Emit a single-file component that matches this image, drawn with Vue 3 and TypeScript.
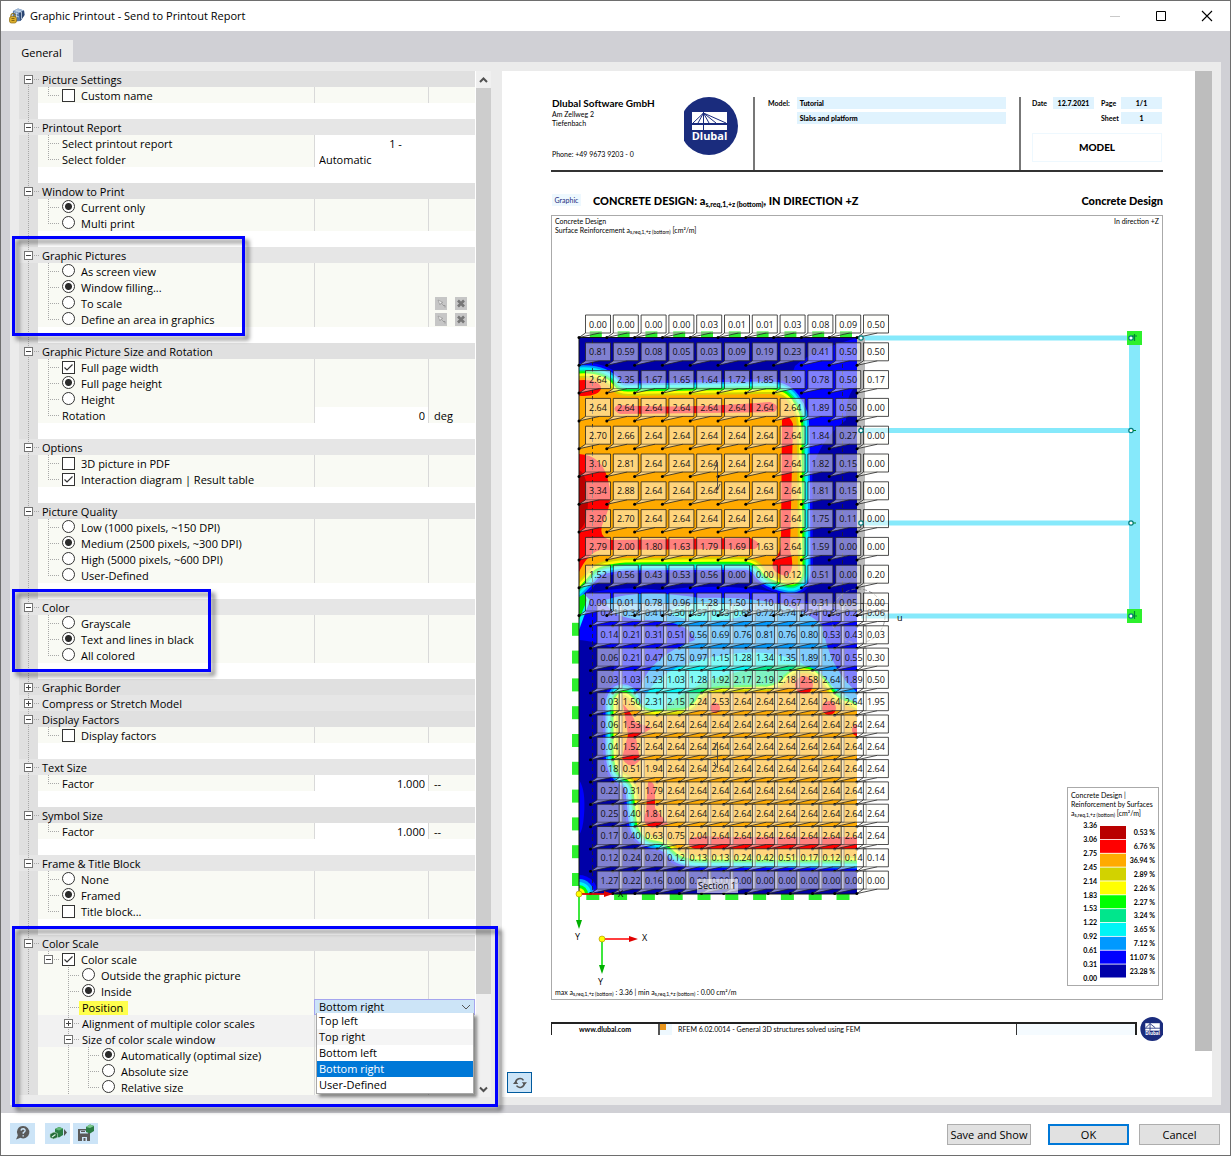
<script setup lang="ts">
import { ref } from 'vue'

type Kind = 'check' | 'radio' | 'text' | 'node'
interface Row {
  label: string
  kind: Kind
  on?: boolean
  level?: number
  last?: boolean
  box?: '-' | '+'
  value?: string
  unit?: string
  wide?: 'center' | 'left'
  tools?: boolean
  combo?: boolean
  plain?: boolean
}
interface Group {
  title: string
  closed?: boolean
  mark?: string
  gap?: boolean
  rows: Row[]
}

const check = (label: string, on = false): Row => ({ label, kind: 'check', on })
const radio = (label: string, on = false): Row => ({ label, kind: 'radio', on })

const groups: Group[] = [
  { title: 'Picture Settings', gap: true, rows: [check('Custom name')] },
  {
    title: 'Printout Report', gap: true, rows: [
      { label: 'Select printout report', kind: 'text', value: '1 -', wide: 'center' },
      { label: 'Select folder', kind: 'text', value: 'Automatic', wide: 'left' },
    ],
  },
  { title: 'Window to Print', gap: true, rows: [radio('Current only', true), radio('Multi print')] },
  {
    title: 'Graphic Pictures', gap: true, mark: 'mark-pictures', rows: [
      radio('As screen view'), radio('Window filling...', true),
      { ...radio('To scale'), tools: true }, { ...radio('Define an area in graphics'), tools: true },
    ],
  },
  {
    title: 'Graphic Picture Size and Rotation', gap: true, rows: [
      check('Full page width', true), radio('Full page height', true), radio('Height'),
      { label: 'Rotation', kind: 'text', value: '0', unit: 'deg' },
    ],
  },
  { title: 'Options', gap: true, rows: [check('3D picture in PDF'), check('Interaction diagram | Result table', true)] },
  {
    title: 'Picture Quality', gap: true, rows: [
      radio('Low (1000 pixels, ~150 DPI)'), radio('Medium (2500 pixels, ~300 DPI)', true),
      radio('High (5000 pixels, ~600 DPI)'), radio('User-Defined'),
    ],
  },
  {
    title: 'Color', gap: true, mark: 'mark-color', rows: [
      radio('Grayscale'), radio('Text and lines in black', true), radio('All colored'),
    ],
  },
  { title: 'Graphic Border', closed: true, rows: [] },
  { title: 'Compress or Stretch Model', closed: true, rows: [] },
  { title: 'Display Factors', gap: true, rows: [check('Display factors')] },
  { title: 'Text Size', gap: true, rows: [{ label: 'Factor', kind: 'text', value: '1.000', unit: '--' }] },
  { title: 'Symbol Size', gap: true, rows: [{ label: 'Factor', kind: 'text', value: '1.000', unit: '--' }] },
  { title: 'Frame & Title Block', gap: true, rows: [radio('None'), radio('Framed', true), check('Title block...')] },
  {
    title: 'Color Scale', mark: 'mark-scale', rows: [
      { ...check('Color scale', true), box: '-' },
      { ...radio('Outside the graphic picture'), level: 2 },
      { ...radio('Inside', true), level: 2 },
      { label: 'Position', kind: 'text', level: 2, combo: true },
      { label: 'Alignment of multiple color scales', kind: 'node', level: 2, box: '+', plain: true },
      { label: 'Size of color scale window', kind: 'node', level: 2, box: '-', plain: true },
      { ...radio('Automatically (optimal size)', true), level: 3 },
      { ...radio('Absolute size'), level: 3 },
      { ...radio('Relative size'), level: 3, last: true },
    ],
  },
]

const isLast = (g: Group, i: number): boolean => g.rows[i].last === true || i === g.rows.length - 1

const positions = ['Top left', 'Top right', 'Bottom left', 'Bottom right', 'User-Defined']
const position = ref('Bottom right')

/* Result values per mesh row */
const rep = (v: string, n: number): string => Array(n).fill(v).join(' ')
const upper: string[][] = [
  '0.00 0.00 0.00 0.00 0.03 0.01 0.01 0.03 0.08 0.09 0.50',
  '0.81 0.59 0.08 0.05 0.03 0.09 0.19 0.23 0.41 0.50 0.50',
  '2.64 2.35 1.67 1.65 1.64 1.72 1.85 1.90 0.78 0.50 0.17',
  rep('2.64', 8) + ' 1.89 0.50 0.00',
  '2.70 2.66 ' + rep('2.64', 6) + ' 1.84 0.27 0.00',
  '3.10 2.81 ' + rep('2.64', 6) + ' 1.82 0.15 0.00',
  '3.34 2.88 ' + rep('2.64', 6) + ' 1.81 0.15 0.00',
  '3.20 2.70 ' + rep('2.64', 6) + ' 1.75 0.11 0.00',
  '2.79 2.00 1.80 1.63 1.79 1.69 1.63 2.64 1.59 0.00 0.00',
  '1.52 0.56 0.43 0.53 0.56 0.00 0.00 0.12 0.51 0.00 0.20',
  '0.00 0.01 0.78 0.96 1.28 1.50 1.10 0.67 0.31 0.05 0.00',
].map(r => r.split(' '))
const lower: string[][] = [
  '0.41 0.34 0.41 0.50 0.57 0.63 0.68 0.72 0.74 0.74 0.66 0.22 0.06',
  '0.14 0.21 0.31 0.51 0.56 0.69 0.76 0.81 0.76 0.80 0.53 0.43 0.03',
  '0.06 0.21 0.47 0.75 0.97 1.15 1.28 1.34 1.35 1.89 1.70 0.55 0.30',
  '0.03 1.03 1.23 1.03 1.28 1.92 2.17 2.19 2.18 2.58 2.64 1.89 0.50',
  '0.03 1.50 2.31 2.15 2.24 2.53 ' + rep('2.64', 6) + ' 1.95',
  '0.06 1.53 ' + rep('2.64', 11),
  '0.04 1.52 ' + rep('2.64', 11),
  '0.18 0.51 1.94 ' + rep('2.64', 10),
  '0.22 0.31 1.79 ' + rep('2.64', 10),
  '0.25 0.40 1.81 ' + rep('2.64', 10),
  '0.17 0.40 0.63 0.75 2.04 ' + rep('2.64', 8),
  '0.12 0.24 0.20 0.12 0.13 0.13 0.24 0.42 0.51 0.17 0.12 0.14 0.14',
  '1.27 0.22 0.16 ' + rep('0.00', 10),
].map(r => r.split(' '))

interface Tag { x: number; y: number; v: string }
const tags: Tag[] = []
lower.forEach((r, j) => r.forEach((v, k) => tags.push({ x: 590.5 + k * 22.2, y: 626 + j * 22.3, v })))
upper.forEach((r, j) => r.forEach((v, k) => tags.push({ x: 579 + k * 27.8, y: 337.5 + j * 27.8, v })))

const zoneA = 'M570 379C596 375 606 382 611 389Q616 396 628 396L770 394Q784 394 790 405Q797 414 797 430L798 572Q797 582 788 580Q768 576 764 567Q757 558 745 557L625 558Q600 560 591 567Q582 578 570 590Z'
const zoneB = 'M618 704Q621 690 631 703Q640 716 655 716L685 714Q698 709 702 699Q708 692 730 692L768 691Q782 689 788 680Q800 669 812 675Q822 682 828 693Q836 705 848 706L870 718V856L700 855Q683 855 676 847Q668 837 655 836Q643 834 641 820L638 790Q636 778 625 773Q618 768 618 750Z'
const bands: [string, number][] = [
  ['#0000ff', 30], ['#0099ff', 25], ['#00f5f5', 21], ['#00e68c', 16], ['#00ff00', 13], ['#ffff00', 9], ['#d2d200', 4],
]
const outerBands = bands.slice(0, 4)
const innerBands = bands.slice(4)

const scaleValues = ['3.36', '3.06', '2.75', '2.45', '2.14', '1.83', '1.53', '1.22', '0.92', '0.61', '0.31', '0.00']
const scaleBands: [string, string][] = [
  ['#b90000', '0.53 %'], ['#ff0000', '6.76 %'], ['#ffaa00', '36.94 %'], ['#d2d200', '2.89 %'], ['#ffff00', '2.26 %'],
  ['#00ff00', '2.27 %'], ['#00e68c', '3.24 %'], ['#00f5f5', '3.65 %'], ['#0099ff', '7.12 %'], ['#0000ff', '11.07 %'], ['#0000a8', '23.28 %'],
]
</script>

<template>
  <div class="window">
    <header class="titlebar">
      <svg class="app-icon" viewBox="0 0 16 16" aria-hidden="true">
        <path d="M4 3 9 0.5 15 2.5 15.5 7 11.5 13 6.5 13.5 3.5 8Z" fill="#5578a8" />
        <path d="M4 3 9 .5 15 2.5 10 5Z" fill="#9fb9d8" />
        <path d="M10 5 15 2.5 15.5 7 11.5 13Z" fill="#2c4672" />
        <path d="M5 4.5 9.5 6M5 7l5 2M7 2.5l5 1.5M7.5 4.5V12M12.5 4v7" stroke="#dbe6f2" stroke-width=".7" fill="none" />
        <path d="M2 9.500V7.500a2 2 0 0 1 4 0v2" fill="none" stroke="#8a6c13" stroke-width="1.200" />
        <rect x="0.500" y="8.500" width="7" height="6.500" rx="2" fill="#dcae2c" stroke="#8a6c13" stroke-width=".7" />
        <path d="M2.500 10.500H5.500M2.500 12.500H5.500" stroke="#6d5206" stroke-width=".8" />
      </svg>
      <h1>Graphic Printout - Send to Printout Report</h1>
      <div class="win-buttons">
        <button type="button" aria-label="Minimize"><svg viewBox="0 0 12 12"><path d="M1 6.500H11" stroke="#c9c9c9" /></svg></button>
        <button type="button" aria-label="Maximize"><svg viewBox="0 0 12 12"><path d="M1.500 1.500H10.500V10.500H1.500Z" stroke="#000" fill="none" /></svg></button>
        <button type="button" aria-label="Close"><svg viewBox="0 0 12 12"><path d="M1 1 11 11M11 1 1 11" stroke="#000" stroke-width="1.100" /></svg></button>
      </div>
    </header>

    <main class="body">
      <div class="tabs"><button type="button" class="tab">General</button></div>
      <div class="panel">
        <div class="tree-pane">
          <div class="tree">
            <section v-for="(g, gi) in groups" :key="g.title" class="group" :class="{ odd: gi % 2 === 1 }">
              <div class="cat">
                <span class="knot root" :class="{ first: gi === 0 }">
                  <button type="button" class="box" :class="{ plus: g.closed }" :aria-label="'Toggle ' + g.title"></button>
                </span>
                <span class="cat-title">{{ g.title }}</span>
              </div>
              <div v-for="(r, i) in g.rows" :key="r.label" class="row" :class="{ plain: r.plain }">
                <span class="gutter"></span>
                <div class="cell name">
                  <span v-if="(r.level ?? 1) >= 2" class="spacer"></span>
                  <span v-if="(r.level ?? 1) >= 3" class="spacer line"></span>
                  <span class="knot" :class="{ last: isLast(g, i), top: r.box === '-' && !r.level }">
                    <button v-if="r.box" type="button" class="box" :class="{ plus: r.box === '+' }" :aria-label="'Toggle ' + r.label"></button>
                  </span>
                  <input v-if="r.kind === 'check'" :id="'f' + gi + '-' + i" type="checkbox" class="tick" :checked="r.on">
                  <input v-if="r.kind === 'radio'" :id="'f' + gi + '-' + i" type="radio" class="dot" :name="'g' + gi + '-' + (r.level ?? 1)" :checked="r.on">
                  <span v-if="r.kind === 'node'">{{ r.label }}</span>
                  <label v-else :for="'f' + gi + '-' + i" :class="{ lit: r.combo }">{{ r.label }}</label>
                </div>
                <div v-if="r.wide" class="cell value wide">
                  <input :id="'f' + gi + '-' + i" type="text" :class="r.wide" :value="r.value">
                </div>
                <div v-else-if="r.combo" class="cell value wide combo">
                  <select :id="'f' + gi + '-' + i" v-model="position">
                    <option v-for="p in positions" :key="p">{{ p }}</option>
                  </select>
                  <svg class="chev" viewBox="0 0 10 6"><path d="M1 1 5 5 9 1" fill="none" stroke="#555" /></svg>
                  <ul class="menu" role="listbox">
                    <li v-for="p in positions" :key="p" role="option" :aria-selected="p === position" @click="position = p">{{ p }}</li>
                  </ul>
                </div>
                <template v-else>
                  <div class="cell value" :class="{ filled: r.value }">
                    <input v-if="r.value" :id="'f' + gi + '-' + i" type="text" class="right" :value="r.value">
                  </div>
                  <div class="cell unit">
                    <span v-if="r.unit">{{ r.unit }}</span>
                    <template v-if="r.tools">
                      <button type="button" class="tool" disabled aria-label="Select in graphics"><svg viewBox="0 0 12 13"><path d="M3 3 8 5.500 6 6 9 9M3 3 5 8 6 6" fill="#eee" stroke="#999" stroke-width=".7" /><path d="M8 8.500h2v2" fill="none" stroke="#999" /></svg></button>
                      <button type="button" class="tool" disabled aria-label="Delete"><svg viewBox="0 0 12 13"><path d="M3 3.500 9 9.500M9 3.500 3 9.500" stroke="#777" stroke-width="2.600" /></svg></button>
                    </template>
                  </div>
                </template>
              </div>
              <div v-if="g.gap" class="row blank"><span class="gutter"></span></div>
              <div v-if="g.mark" class="mark" :class="g.mark"></div>
            </section>
          </div>
          <div class="scroll" aria-hidden="true">
            <svg viewBox="0 0 15 16"><path d="M4 10.500 7.500 7 11 10.500" fill="none" stroke="#505050" stroke-width="2" /></svg>
            <div class="thumb"></div>
            <div class="rest"></div>
            <svg viewBox="0 0 15 16"><path d="M4 7 7.500 10.500 11 7" fill="none" stroke="#505050" stroke-width="2" /></svg>
          </div>
        </div>

        <div class="preview">
          <article class="sheet">
            <div class="head">
              <div class="company">
                <address>
                  <strong>Dlubal Software GmbH</strong>
                  <span>Am Zellweg 2</span>
                  <span>Tiefenbach</span>
                  <span class="phone">Phone: +49 9673 9203 - 0</span>
                </address>
                <svg class="logo" viewBox="4 0 54 58">
                  <circle cx="29" cy="29" r="29" fill="#1a2c7d" />
                  <rect x="12" y="15" width="35" height="11" fill="#fff" />
                  <rect x="12" y="28" width="35" height="5" fill="#fff" />
                  <path d="M23.500 15V33M23.500 16 13 26M23.500 16 18 26M23.500 16 29 26M23.500 16 36 26M23.500 16 46 26" stroke="#1a2c7d" stroke-width="1" fill="none" />
                  <text x="29.500" y="43" text-anchor="middle" class="logo-text">Dlubal</text>
                </svg>
              </div>
              <div class="model">
                <span>Model:</span>
                <div class="fields"><b>Tutorial</b><b>Slabs and platform</b></div>
              </div>
              <div class="meta">
                <div class="meta-grid">
                  <span>Date</span><b>12.7.2021</b><span>Page</span><b>1/1</b>
                  <span></span><i></i><span>Sheet</span><b>1</b>
                </div>
                <div class="kind">MODEL</div>
              </div>
            </div>

            <div class="heading">
              <span class="chip">Graphic</span>
              <h2>CONCRETE DESIGN: a<sub>s,req,1,+z (bottom)</sub>, IN DIRECTION +Z</h2>
              <h2 class="end">Concrete Design</h2>
            </div>

            <svg class="plot" viewBox="551 215 612 785">
              <defs>
                <clipPath id="slab"><rect x="579" y="337.500" width="278" height="556.500" /></clipPath>
              </defs>
              <rect x="551.500" y="215.500" width="611" height="784" fill="#fff" stroke="#aaa" />
              <g class="print slim">
                <text x="555" y="224">Concrete Design</text>
                <text x="555" y="233">Surface Reinforcement a<tspan class="sub" dy="1">s,req,1,+z (bottom)</tspan><tspan dy="-1"> [cm²/m]</tspan></text>
                <text x="1159" y="224" text-anchor="end">In direction +Z</text>
                <text x="555" y="995">max a<tspan class="sub" dy="1">s,req,1,+z (bottom)</tspan><tspan dy="-1"> : 3.36 | min a</tspan><tspan class="sub" dy="1">s,req,1,+z (bottom)</tspan><tspan dy="-1"> : 0.00 cm²/m</tspan></text>
              </g>

              <g stroke="#86e9fb" stroke-width="5">
                <path d="M861 338H1134M861 430.500H1131M861 523H1131M861 616H1134" />
                <path d="M1134.500 338V616" stroke-width="11" />
              </g>
              <g fill="#2df02d">
                <rect x="1127" y="331" width="15" height="14" />
                <rect x="1127" y="609" width="15" height="14" />
                <rect v-for="n in 10" :key="'t' + n" :x="562 + n * 27.8" y="331" width="12" height="6" />
                <rect v-for="n in 10" :key="'b' + n" :x="558.5 + n * 27.8" y="894" width="13" height="6" />
                <rect v-for="n in 10" :key="'l' + n" x="572" :y="595 + n * 27.8" width="7" height="13" />
              </g>
              <g fill="#fff" stroke="#007a7a" stroke-width="1.200">
                <circle cx="1131" cy="338" r="2.200" /><circle cx="1131" cy="430.500" r="2.200" />
                <circle cx="1131" cy="523" r="2.200" /><circle cx="1131" cy="616" r="2.200" />
              </g>
              <path d="M1134.500 334V341M1132 336h5M1134.500 611v8M1132 616h5M1133 430.500h3M1133 523h3" stroke="#083" stroke-width="1.200" />

              <rect x="857" y="338" width="8" height="278" fill="#b9b9b9" />
              <g clip-path="url(#slab)">
                <rect x="579" y="337" width="278" height="557" fill="#0000a8" />
                <path d="M795 366Q812 350 857 338V385Q845 395 846 420Q820 440 812 470L803 560H790V380Z" fill="#0000ff" />
                <path d="M579 595Q620 585 660 590Q750 580 800 600L857 612V700H640Q600 690 620 650Q590 640 579 640Z" fill="#0000ff" />
                <path v-for="[c, w] in bands" :key="c" :d="zoneA" fill="none" :stroke="c" :stroke-width="w" stroke-linejoin="round" />
                <path :d="zoneA" fill="#ffaa00" />
                <path v-for="[c, w] in outerBands" :key="c" :d="zoneB" fill="none" :stroke="c" :stroke-width="w" stroke-linejoin="round" />
                <path d="M605 600Q640 588 700 598Q790 595 822 625Q830 670 857 692V720H640Q628 665 695 640Q690 622 650 620Q610 620 605 600Z" fill="#0099ff" />
                <path d="M668 612Q690 596 740 606Q755 618 720 620Q680 622 668 612ZM640 712Q648 672 700 660Q760 644 800 662Q832 686 857 704V722H640Z" fill="#00f5f5" />
                <path d="M655 716Q692 682 730 674Q780 660 806 666Q832 686 857 708V725Z" fill="#00e68c" />
                <path v-for="[c, w] in innerBands" :key="c" :d="zoneB" fill="none" :stroke="c" :stroke-width="w" stroke-linejoin="round" />
                <path :d="zoneB" fill="#ffaa00" />
                <g fill="#ff0000">
                  <ellipse cx="584" cy="388" rx="17" ry="8" />
                  <path d="M579 454Q602 455 608 480Q614 500 604 520Q596 538 612 540L750 538Q764 543 755 549L600 550Q588 553 579 572Z" />
                  <path d="M618 405Q680 409 770 402Q782 406 774 412L620 414Q610 409 618 405ZM782 420Q788 412 793 424L790 550Q796 572 786 576Q768 572 774 560Q782 552 781 540Z" />
                  <path d="M623 704Q634 716 635 722L652 728 636 738 640 760Q630 772 622 758L628 735Z" />
                  <circle cx="804" cy="685" r="9" /><circle cx="829" cy="708" r="7" /><circle cx="715" cy="708" r="5" />
                  <ellipse cx="857" cy="730" rx="5" ry="6" />
                  <path d="M648 782Q654 780 655 790V808L668 824 652 828Q640 824 646 812ZM690 838Q700 835 720 837H857V849H695Q685 846 690 838Z" />
                </g>
                <path d="M579 470Q588 475 588 500Q588 525 579 530Z" fill="#b90000" />
                <path d="M579 780Q586 790 584 815Q583 830 579 835Z" fill="#0000ff" />
                <circle cx="579" cy="894" r="19" fill="#0000ff" /><circle cx="579" cy="894" r="15" fill="#0099ff" />
                <circle cx="579" cy="894" r="12" fill="#00f5f5" /><circle cx="579" cy="894" r="9" fill="#00ff00" />
                <circle cx="579" cy="894" r="6" fill="#ffff00" />
                <path d="M579 630 590 600 584 594 579 597Z" fill="#00f5f5" />
                <path d="M579 620 587 600 584 594 579 597Z" fill="#00e600" />
              </g>
              <path d="M579 337.500H857M579 337.500V894M579 894H857" stroke="#111" stroke-width="1" />
              <path d="M592.500 340V890M842.500 350V610" stroke="#222" stroke-width=".8" stroke-dasharray="4 3" />
              <circle cx="858" cy="616" r="27" fill="none" stroke="#777" stroke-width=".7" stroke-dasharray="4 2" />

              <g v-for="(t, i) in tags" :key="i" class="tag">
                <path :d="`M${t.x} ${t.y}L${t.x + 6.5} ${t.y - 4.5}V${t.y - 22.5}H${t.x + 31.500}V${t.y - 4.5}H${t.x + 20.5}Z`" />
                <path class="edge" :d="`M${t.x + 6.5} ${t.y - 4.5}H${t.x + 20.5}`" />
                <circle :cx="t.x" :cy="t.y" r="1.500" />
                <text :x="t.x + 19" :y="t.y - 10">{{ t.v }}</text>
              </g>

              <g fill="#fff" stroke="#007a7a" stroke-width="1.200">
                <circle cx="861" cy="338" r="2.200" /><circle cx="861" cy="430.500" r="2.200" /><circle cx="861" cy="523" r="2.200" />
              </g>
              <path d="M717.500 462V490M714 470 717.500 463M717.500 490 720 484M717.500 742V768M714 750 717.500 742M714 762 717.500 768" stroke="#444" stroke-width=".9" fill="none" />
              <rect x="697" y="879" width="41" height="14" fill="#fff" fill-opacity=".6" />
              <g class="axis">
                <text x="698" y="889">Section 1</text>
                <text x="897" y="621">u</text>
                <text x="618" y="897">X</text>
                <text x="575" y="940">Y</text>
                <text x="642" y="941">X</text>
                <text x="598" y="985">Y</text>
              </g>
              <path d="M579 894H605M602 939H630" stroke="#f00" stroke-width="1.500" />
              <path d="M604 891 613 894 604 897ZM629 936 638 939 629 942Z" fill="#e00000" />
              <path d="M579 894V921M602 939V966" stroke="#00e000" stroke-width="1.500" />
              <path d="M576 920H582L579 929ZM599 965H605L602 974Z" fill="#00b000" />
              <circle cx="579" cy="894" r="3" fill="#ff0" stroke="#a80" stroke-width=".6" />
              <circle cx="602" cy="939" r="3" fill="#ff0" stroke="#a80" stroke-width=".6" />

              <rect x="1067.500" y="787.500" width="91" height="198" fill="#fff" stroke="#aaa" />
              <g class="print slim">
                <text x="1071" y="798">Concrete Design |</text>
                <text x="1071" y="807">Reinforcement by Surfaces</text>
                <text x="1071" y="816">a<tspan class="sub" dy="1">s,req,1,+z (bottom)</tspan><tspan dy="-1"> [cm²/m]</tspan></text>
              </g>
              <g class="print">
                <text v-for="(v, i) in scaleValues" :key="v" x="1097" :y="828 + i * 13.9" text-anchor="end">{{ v }}</text>
                <template v-for="([c, p], i) in scaleBands" :key="c">
                  <rect x="1100" :y="826 + i * 13.85" width="26" height="13" :fill="c" />
                  <text x="1155" :y="835 + i * 13.9" text-anchor="end">{{ p }}</text>
                </template>
              </g>
            </svg>

            <footer class="sheet-foot">
              <div class="strip">
                <a href="#" class="site">www.dlubal.com</a>
                <span class="swatch"></span>
                <span class="about">RFEM 6.02.0014 - General 3D structures solved using FEM</span>
                <span class="pale"></span>
              </div>
              <svg class="logo-small" viewBox="0 0 54 58">
                <circle cx="29" cy="29" r="29" fill="#1a2c7d" />
                <rect x="12" y="15" width="35" height="11" fill="#fff" />
                <rect x="12" y="28" width="35" height="5" fill="#fff" />
                <path d="M23.500 15V33M23.500 16 13 26M23.500 16 36 26" stroke="#1a2c7d" stroke-width="2" fill="none" />
                <text x="29.500" y="44" text-anchor="middle" class="logo-text">Dlubal</text>
              </svg>
            </footer>
            <button type="button" class="refresh" aria-label="Refresh preview">
              <svg viewBox="0 0 16 16"><path d="M3 8a5 5 0 0 1 9-3M13 8a5 5 0 0 1-9 3" fill="none" stroke="#555" stroke-width="1.800" /><path d="M10 7H16L13 10.500ZM0 9H6L3 5.500Z" fill="#555" /></svg>
            </button>
          </article>
          <div class="shade"></div>
        </div>
      </div>
    </main>

    <footer class="actions">
      <button type="button" class="icon help" aria-label="Help"><svg viewBox="0 0 18 18"><path d="M9 2a6.200 6.200 0 1 1-2.500 11.800L2 15.500 3.800 11.500A6.200 6.200 0 0 1 9 2Z" fill="#5a5a5a" /><path d="M7 6.500Q7.300 4.800 9.200 4.800 11.300 5 11 6.900 10.700 7.900 9.300 8.600V9.800M9.200 11.200V12.600" fill="none" stroke="#cce4f7" stroke-width="1.500" /></svg></button>
      <button type="button" class="icon" aria-label="Load defaults"><svg viewBox="0 0 18 18"><path d="M6 5 10 3 14 4.500V11L10 13.500 6 12Z" fill="#2b7d43" /><path d="M6 5 10 3 14 4.500 10 6.500Z" fill="#63b878" /><path d="M1 10 5 8 8.500 9.500V13.500L4.500 15 1 13.500Z" fill="#256b39" stroke="#bfe0c8" stroke-width=".6" /><path d="M3 13 6.500 10.500" stroke="#d9f2df" stroke-width="1.200" /><path d="M15 5 18 8.500 15 12Z" fill="#555" /></svg></button>
      <button type="button" class="icon" aria-label="Save as default"><svg viewBox="0 0 18 18"><path d="M1 5H9V6.500H3V9.500H11V8.500H13V17H10V13H5V17H1Z" fill="#5a5a5a" /><path d="M6.500 14H8.500V17H6.500ZM4 7H8V8H4Z" fill="#5a5a5a" /><path d="M9 3 13 .5 17 2V7L13 9.500 9 8Z" fill="#2b7d43" /><path d="M9 3 13 .5 17 2 13 4Z" fill="#7cc98e" /></svg></button>
      <span class="push"></span>
      <button type="button" class="btn save">Save and Show</button>
      <button type="button" class="btn ok">OK</button>
      <button type="button" class="btn">Cancel</button>
    </footer>
  </div>
</template>

<style>
body { margin: 0; background: #fff; }
</style>

<style scoped>
* { box-sizing: border-box; }
.window {
  min-height: 100vh; display: flex; flex-direction: column;
  border: 1px solid #6e6e6e; background: #fff; color: #000;
  font-family: "Open Sans", "Noto Sans", sans-serif; font-size: 11px; line-height: 16px;
}
button, input, select { font: inherit; color: inherit; margin: 0; padding: 0; border: 0; background: none; border-radius: 0; }
svg { display: block; }
h1, h2 { margin: 0; font-weight: 400; }

.titlebar { display: flex; align-items: center; height: 30px; padding: 0 7px 0 8px; }
.app-icon { width: 16px; height: 16px; margin-right: 5px; }
.titlebar h1 { flex: 1; font-size: 11px; line-height: 30px; }
.win-buttons { display: flex; }
.win-buttons button { width: 46px; height: 30px; display: grid; place-items: center; }
.win-buttons button:last-child { width: 32px; margin-left: 7px; }
.win-buttons svg { width: 12px; height: 12px; }

.body { flex: 1; display: flex; flex-direction: column; padding: 9px 9px 8px; background: #d0d0d5; }
.tab { display: block; height: 22px; width: 63px; padding-top: 4px; background: #ebebeb; }
.panel { flex: 1; display: flex; gap: 11px; padding: 9px 9px 8px; background: #ebebeb; }

.tree-pane { flex: 0 0 472px; display: flex; align-items: flex-start; }
.tree { flex: 1; background: #fff; padding-right: 1px; }
.group { position: relative; }
.cat { display: flex; height: 16px; background: #e0e0e0; }
.odd .cat { background: #e6e6e6; }
.cat-title { padding-left: 1px; white-space: nowrap; line-height: 18px; }
.row { display: flex; height: 16px; }
.gutter {
  flex: 0 0 19px;
  background: repeating-linear-gradient(#a8a8a8 0 1px, transparent 1px 2px) 9px 0 / 1px 100% no-repeat, #e0e0e0;
}
.cell { background: #f9faf4; line-height: 18px; white-space: nowrap; }
.plain .cell { background: #f2f2f2; }
.name { flex: 1; display: flex; }
.value { flex: 0 0 114px; border-left: 1px solid #d9d9d9; }
.unit { flex: 0 0 47px; border-left: 1px solid #d9d9d9; padding-left: 5px; display: flex; gap: 7px; }
.filled, .wide { background: #fff; }
.wide { flex-basis: 161px; }
.value input { display: block; width: 100%; height: 16px; padding: 2px 3px 0 4px; line-height: 16px; }
.right { text-align: right; }
.center { text-align: center; }

.spacer { flex: 0 0 20px; }
.line { background: repeating-linear-gradient(#a8a8a8 0 1px, transparent 1px 2px) 10px 0 / 1px 100% no-repeat; }
.knot {
  flex: 0 0 24px; padding: 4px 0 0 6px;
  background:
    repeating-linear-gradient(#a8a8a8 0 1px, transparent 1px 2px) 10px 0 / 1px 100% no-repeat,
    repeating-linear-gradient(90deg, #a8a8a8 0 1px, transparent 1px 2px) 10px 8px / 12px 1px no-repeat;
}
.knot.last, .knot.top { background-size: 1px 8px, 12px 1px; }
.knot.root { flex-basis: 22px; padding-left: 5px; background-position: 9px 0, 9px 8px; }
.knot.first { background-position: 9px 8px, 9px 8px; }
.box {
  display: block; width: 9px; height: 9px; border: 1px solid #757575;
  background: linear-gradient(#444, #444) center / 5px 1px no-repeat, #fff;
}
.box.plus { background: linear-gradient(#444, #444) center / 5px 1px no-repeat, linear-gradient(#444, #444) center / 1px 5px no-repeat, #fff; }
.tick, .dot { appearance: none; flex: none; width: 13px; height: 13px; margin: 2px 6px 0 0; border: 1px solid #333; background: #fff; }
.tick:checked { background: url("data:image/svg+xml,%3Csvg xmlns='http://www.w3.org/2000/svg' viewBox='0 0 11 11'%3E%3Cpath d='M1.500 5.500 4 8 9.500 2.500' fill='none' stroke='%23333' stroke-width='1.200'/%3E%3C/svg%3E") #fff; }
.dot { margin-top: 1px; border-radius: 50%; }
.dot:checked { background: radial-gradient(circle, #2b2b2b 3px, #fff 4px); }
.lit { height: 14px; margin: 2px 0 0 -3px; padding: 0 5px 0 3px; line-height: 14px; background: #ffff4d; }

.tool { width: 12px; height: 13px; margin: 2px 0 0 1px; background: #c6c6c6; }
.combo { position: relative; border: 1px solid #a5a5ee; background: #cce4f7; }
.combo select { appearance: none; display: block; width: 100%; height: 14px; padding-left: 4px; line-height: 14px; }
.chev { position: absolute; right: 3px; top: 4px; width: 10px; height: 6px; }
.menu {
  position: absolute; z-index: 2; top: 13px; left: 1px; width: 158px; margin: 0; padding: 0; list-style: none;
  border: 1px solid #a8a8a8; border-top: 0; background: #fff; box-shadow: 3px 3px 3px rgba(0, 0, 0, .45);
}
.menu li { height: 16px; padding-left: 2px; line-height: 16px; }
.menu li:nth-child(2) { background: #f5f5f5; }
.menu li[aria-selected="true"] { background: #0078d7; color: #fff; }

.mark { position: absolute; z-index: 3; left: -7px; border: 3px solid #00f; filter: drop-shadow(4px 4px 2px rgba(0, 0, 0, .5)); pointer-events: none; }
.mark-pictures { top: -11px; width: 233px; height: 100px; }
.mark-color { top: -10px; width: 199px; height: 83px; }
.mark-scale { top: -9px; width: 486px; height: 181px; }

.scroll { width: 15px; align-self: stretch; display: flex; flex-direction: column; background: #f0f0f0; }
.scroll svg { height: 17px; }
.thumb { flex: 906; background: #cdcdcd; }
.rest { flex: 86; }

.preview { flex: 1; display: flex; align-items: flex-start; background: #fff; }
.sheet {
  flex: 1; min-width: 0; padding: 26px 32px 0 49px;
  font-family: Lato, "Open Sans", sans-serif; font-size: 7px; font-weight: 700; line-height: 9px;
}
.shade { flex: 0 0 17px; height: 980px; background: #bdbdbd; }
.head { display: flex; height: 75px; border-bottom: 2px solid #333; }
.company { flex: 0 0 204px; display: flex; justify-content: space-between; padding-right: 15px; border-right: 2px solid #777; }
address { display: flex; flex-direction: column; padding-left: 1px; font-style: normal; font-weight: 400; white-space: nowrap; }
address strong { font-size: 10px; font-weight: 700; line-height: 13px; }
.phone { margin-top: 22px; }
.logo { width: 54px; height: 58px; }
.logo-text { font: 700 11px "Open Sans", sans-serif; fill: #fff; }
.model { flex: 1; display: flex; gap: 7px; padding: 0 13px; line-height: 12px; }
.fields { flex: 1; display: flex; flex-direction: column; gap: 3px; }
.fields b { height: 12px; padding-left: 3px; background: #e0f3fe; }
.meta { flex: 0 0 144px; border-left: 2px solid #777; padding: 0 1px 0 11px; }
.meta-grid { display: grid; grid-template-columns: 21px 41px 27px 41px; row-gap: 3px; line-height: 12px; }
.meta-grid b { text-align: center; background: #e0f3fe; }
.meta-grid span:nth-of-type(2n) { padding-left: 7px; }
.kind { height: 29px; margin-top: 9px; border: 1px solid #eef8fe; font-size: 10px; font-weight: 900; line-height: 27px; text-align: center; }
.heading { display: flex; align-items: center; height: 43px; padding-top: 15px; }
.chip { width: 29px; height: 12px; margin: 0 12px 2px 1px; line-height: 12px; text-align: center; font-weight: 400; background: #eef8fe; color: #1a2c7d; }
.heading h2 { font-size: 11px; font-weight: 900; line-height: 14px; white-space: nowrap; }
.heading sub { font-size: 7px; line-height: 7px; vertical-align: -2px; }
.heading .end { margin-left: auto; }
.plot { width: 100%; }
.print { font: 700 7px Lato, sans-serif; }
.slim { font-weight: 400; }
.sub { font-size: 5px; }
.tag path { fill: #fffffa; fill-opacity: .5; stroke: #222; stroke-width: .8; }
.tag .edge { fill: none; stroke-width: .5; }
.tag text { font: 9px "Open Sans", sans-serif; text-anchor: middle; fill: #111; }
.axis { font: 9px "Open Sans", sans-serif; }

.sheet-foot { display: flex; gap: 3px; height: 24px; margin-top: 17px; }
.strip { flex: 1; display: flex; height: 13px; margin-top: 5px; border: solid #222; border-width: 2px 2px 0 1px; line-height: 11px; }
.site { width: 108px; color: inherit; text-decoration: none; text-align: center; border-right: 2px solid #555; }
.swatch { width: 12px; margin-right: 6px; background: linear-gradient(#e8951c, #e8951c) 0 0 / 6px 6px no-repeat, #eef8fe; }
.about { flex: 1; white-space: nowrap; font-weight: 400; }
.pale { flex: 0 0 119px; border-left: 1px solid #333; background: #f5fbff; }
.logo-small { width: 23px; height: 24px; }
.refresh { display: grid; place-items: center; width: 25px; height: 21px; margin: 31px 0 0 -44px; border: 1px solid #005a9e; background: #cce4f7; }
.refresh svg { width: 14px; height: 14px; }

.actions { display: flex; align-items: center; height: 42px; padding: 0 10px 0 9px; }
.icon { display: grid; place-items: center; width: 25px; height: 21px; margin: 0 3px 2px 0; background: #cce4f7; }
.icon svg { width: 18px; height: 18px; }
.help { margin-right: 10px; }
.push { flex: 1; }
.btn { width: 81px; height: 21px; margin-left: 10px; border: 1px solid #adadad; background: #e1e1e1; line-height: 19px; }
.save { width: 84px; margin-right: 7px; }
.ok { border: 2px solid #0078d7; line-height: 17px; }
</style>
